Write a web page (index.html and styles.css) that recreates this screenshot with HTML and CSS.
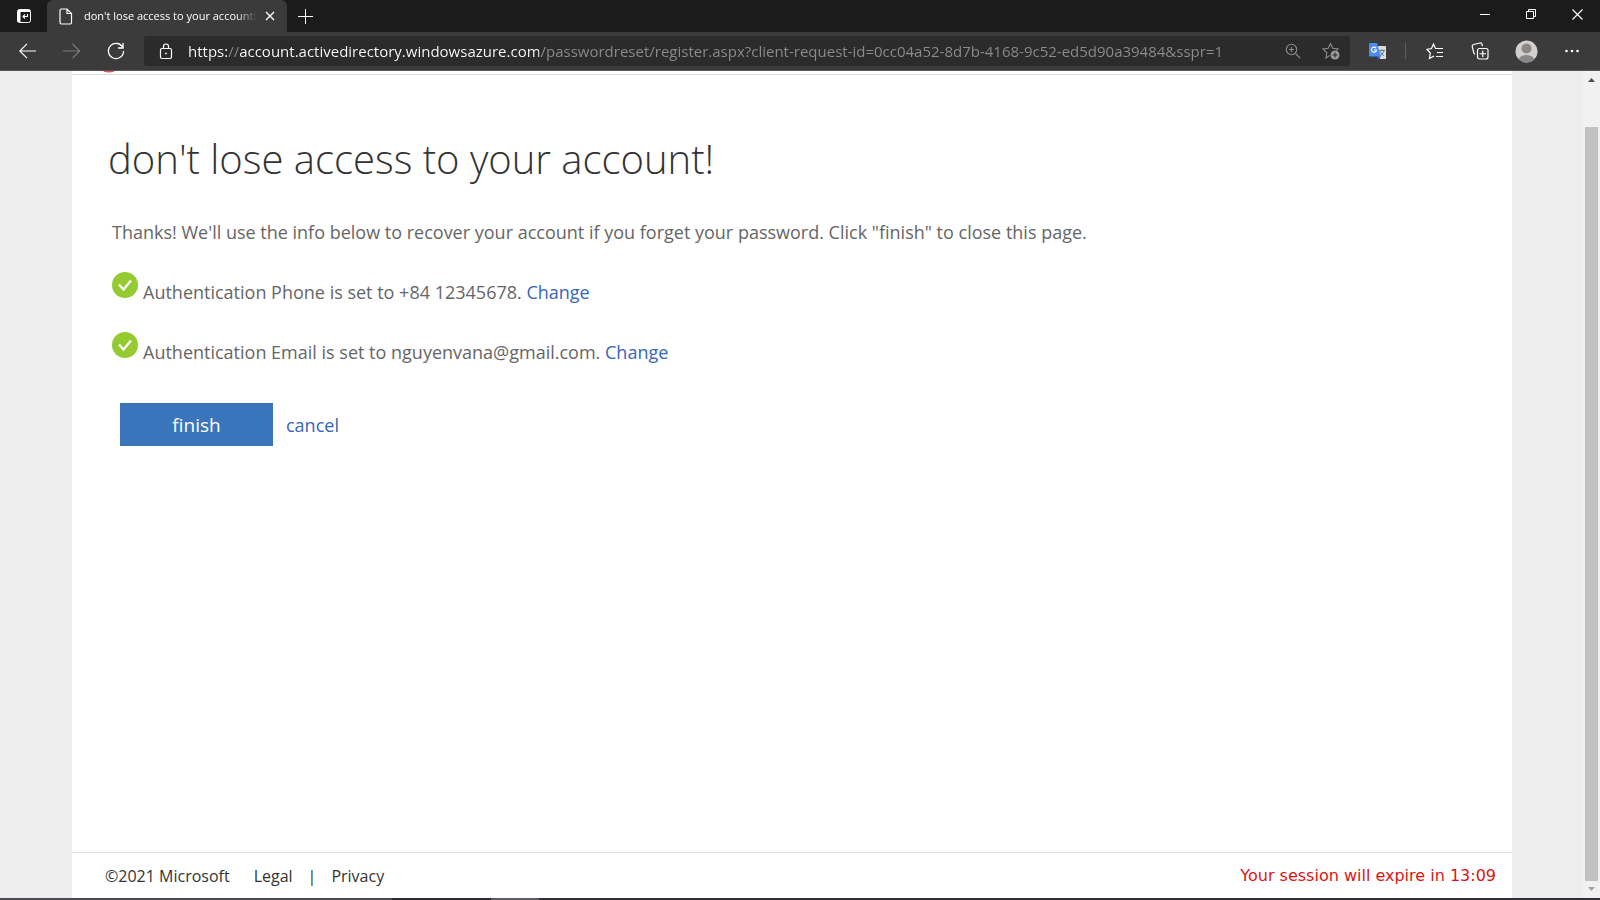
FILE: index.html
```
<!DOCTYPE html>
<html lang="en">

<head>
    <meta charset="UTF-8">
    <meta name="viewport" content="width=device-width, initial-scale=1.0">
    <title>don't lose access to your account!</title>
    <link rel="stylesheet" href="styles.css">
</head>

<body>
    <header class="browser">
        <div class="tab-strip">
            <button class="icon-btn tab-actions" aria-label="Tab actions">
                <svg width="16" height="16" viewBox="0 0 16 16" fill="none" stroke="#fff">
                    <rect x="1.5" y="1.5" width="13" height="13" rx="2" />
                    <path d="M2 3h12" stroke-width="2" />
                    <path d="M3 4v10" stroke-width="3" />
                    <path d="M11.500 6v2.500H7M9 6.500l-2 2 2 2" stroke-width="1.1" />
                </svg>
            </button>
            <div class="tab">
                <svg width="14" height="17" viewBox="0 0 14 17" fill="none" stroke="#fff" stroke-width="1.2">
                    <path d="M2.500 1H8l4.500 4.500V14.500a1.500 1.500 0 0 1-1.500 1.500H2.500A1.500 1.500 0 0 1 1 14.500v-12A1.500 1.500 0 0 1 2.500 1zM8 1v4.500h4.500" />
                </svg>
                <span class="tab-title">don't lose access to your account!</span>
                <button class="icon-btn tab-close" aria-label="Close tab">
                    <svg width="10" height="10" viewBox="0 0 10 10" stroke="#fff" stroke-width="1.3">
                        <path d="M1 1l8 8M9 1L1 9" />
                    </svg>
                </button>
            </div>
            <button class="icon-btn new-tab" aria-label="New tab">
                <svg width="15" height="15" viewBox="0 0 15 15" stroke="#fff">
                    <path d="M7.500 0v15M0 7.500h15" />
                </svg>
            </button>
            <div class="window-buttons">
                <button class="icon-btn" aria-label="Minimize">
                    <svg width="10" height="11" viewBox="0 0 10 11" stroke="#fff"><path d="M0 5.500h10" /></svg>
                </button>
                <button class="icon-btn" aria-label="Restore">
                    <svg width="10" height="10" viewBox="0 0 10 10" fill="none" stroke="#fff">
                        <path d="M.5 2.500h7v7h-7zM2.500 2.500v-2h7v7h-2" />
                    </svg>
                </button>
                <button class="icon-btn" aria-label="Close">
                    <svg width="11" height="11" viewBox="0 0 11 11" stroke="#fff" stroke-width="1.1">
                        <path d="M.5.5l10 10M10.500.5l-10 10" />
                    </svg>
                </button>
            </div>
        </div>

        <div class="toolbar">
            <div class="nav-buttons">
                <button class="icon-btn" aria-label="Back">
                    <svg width="18" height="16" viewBox="0 0 18 16" fill="none" stroke="#fff" stroke-width="1.2">
                        <path d="M17 8H1M8 .8L.8 8 8 15.200" />
                    </svg>
                </button>
                <button class="icon-btn" aria-label="Forward" disabled>
                    <svg width="18" height="16" viewBox="0 0 18 16" fill="none" stroke="#7d7d7d" stroke-width="1.2">
                        <path d="M0 8h16.500M9.500.8L16.700 8l-7.200 7.200" />
                    </svg>
                </button>
                <button class="icon-btn" aria-label="Refresh">
                    <svg width="18" height="18" viewBox="0 0 18 18" fill="none" stroke="#fff" stroke-width="1.3">
                        <path d="M16 6A7.600 7.600 0 1 0 16.600 9M16 1v5h-5" />
                    </svg>
                </button>
            </div>
            <form class="address-bar">
                <svg width="14" height="17" viewBox="0 0 14 17" fill="none" stroke="#fff" stroke-width="1.2">
                    <rect x="1.500" y="5.500" width="11" height="10" rx="1.500" />
                    <path d="M4.500 5.500V3.500a2.500 2.500 0 0 1 5 0v2" />
                    <circle cx="7" cy="10.500" r=".7" fill="#fff" stroke-width=".5" />
                </svg>
                <input class="url" type="text" aria-label="Address" value="https://account.activedirectory.windowsazure.com/passwordreset/register.aspx?client-request-id=0cc04a52-8d7b-4168-9c52-ed5d90a39484&amp;sspr=1">
                <button type="button" class="icon-btn" aria-label="Zoom">
                    <svg width="16" height="16" viewBox="0 0 16 16" fill="none" stroke="#8c8c8c" stroke-width="1.1">
                        <circle cx="6.500" cy="6.500" r="5.200" />
                        <path d="M10.500 10.500L15 15M4 6.500h5M6.500 4v5" />
                    </svg>
                </button>
                <button type="button" class="icon-btn" aria-label="Add to favorites">
                    <svg width="18" height="18" viewBox="0 0 18 18" fill="none" stroke="#8c8c8c" stroke-width="1.1">
                        <path d="M7.500 13.500L4 16l.8-5.200L1 7l5.200-.8L8.500 1.500l2.300 4.700L16 7l-1.500 1.500" />
                        <circle cx="13" cy="13" r="4.500" fill="#9b9b9b" stroke="none" />
                        <path d="M13 10.500v5M10.500 13h5" stroke="#2b2b2b" />
                    </svg>
                </button>
            </form>
            <div class="toolbar-buttons">
                <button class="icon-btn" aria-label="Google Translate">
                    <svg width="17" height="17" viewBox="0 0 17 17">
                        <path d="M7 3h9a1 1 0 0 1 1 1v11a1 1 0 0 1-1 1h-5z" fill="#dcdcdc" />
                        <path d="M10 7.500h6M13 6v1.500M15 7.500c-.5 3-2.500 4.500-4 5M11.500 8.500c.5 2 2 3.500 3.500 4" fill="none" stroke="#607d8b" />
                        <path d="M8.500 13.500h3.500L9.500 16.500z" fill="#3367d6" />
                        <path d="M1 0h7l4 13.500H1a1 1 0 0 1-1-1V1a1 1 0 0 1 1-1z" fill="#4c8bf5" />
                        <path d="M7 5.200A2.500 2.500 0 1 0 7.500 7H5" fill="none" stroke="#fff" stroke-width="1.2" />
                    </svg>
                </button>
                <span class="divider"></span>
                <button class="icon-btn" aria-label="Favorites">
                    <svg width="17" height="17" viewBox="0 0 17 17" fill="none" stroke="#fff" stroke-width="1.2">
                        <path d="M10 5.500H9.500L7.500 1 5.500 5.500 1 6.500 4.300 10 3.500 15.500 8 13M9 5.500h8M11 9.500h6M10 13.500h7" />
                    </svg>
                </button>
                <button class="icon-btn" aria-label="Collections">
                    <svg width="18" height="18" viewBox="0 0 18 18" fill="none" stroke="#fff" stroke-width="1.2">
                        <rect x="6.500" y="6.500" width="10.500" height="10.500" rx="2" />
                        <path d="M11.750 8.500v6.500M8.500 11.750H15M4 12.500L2.800 11 1.200 4.500A1.800 1.800 0 0 1 2.500 2.500L9 1a1.800 1.800 0 0 1 2 1.200l.5 2" />
                    </svg>
                </button>
                <button class="icon-btn" aria-label="Profile">
                    <svg width="23" height="23" viewBox="0 0 23 23">
                        <defs><clipPath id="avatar"><circle cx="11.500" cy="11.500" r="11" /></clipPath></defs>
                        <g clip-path="url(#avatar)">
                            <rect width="23" height="23" fill="#d2d0ce" />
                            <circle cx="11.500" cy="8.500" r="5" fill="#8a8886" />
                            <ellipse cx="11.500" cy="20.500" rx="8" ry="5.500" fill="#8a8886" />
                        </g>
                    </svg>
                </button>
                <button class="icon-btn" aria-label="Settings and more">
                    <svg width="14" height="4" viewBox="0 0 14 4" fill="#fff">
                        <circle cx="1.500" cy="2" r="1.300" />
                        <circle cx="7" cy="2" r="1.300" />
                        <circle cx="12.500" cy="2" r="1.300" />
                    </svg>
                </button>
            </div>
        </div>
    </header>

    <div class="viewport">
        <div class="page">
            <div class="banner">
                <svg width="12" height="2" viewBox="0 0 12 2"><ellipse cx="6" cy="0" rx="5.500" ry="1.400" fill="#e8504a" /></svg>
            </div>
            <main>
                <h1>don't lose access to your account!</h1>
                <div class="info">
                    <p>Thanks! We'll use the info below to recover your account if you forget your password. Click "finish" to close this page.</p>
                    <p class="method">
                        <svg width="26" height="26" viewBox="0 0 26 26">
                            <circle cx="13" cy="13" r="13" fill="#94cb31" />
                            <path d="M7 12.500l4.500 5 7.500-9" fill="none" stroke="#fff" stroke-width="2.200" />
                        </svg>
                        <span>Authentication Phone is set to +84 12345678. <a href="#">Change</a></span>
                    </p>
                    <p class="method">
                        <svg width="26" height="26" viewBox="0 0 26 26">
                            <circle cx="13" cy="13" r="13" fill="#94cb31" />
                            <path d="M7 12.500l4.500 5 7.500-9" fill="none" stroke="#fff" stroke-width="2.200" />
                        </svg>
                        <span>Authentication Email is set to nguyenvana@gmail.com. <a href="#">Change</a></span>
                    </p>
                </div>
                <div class="actions">
                    <button class="finish">finish</button>
                    <a href="#">cancel</a>
                </div>
            </main>
            <footer>
                <span class="copyright">©2021 Microsoft</span>
                <a href="#">Legal</a>
                <span class="separator">|</span>
                <a href="#">Privacy</a>
                <span class="session">Your session will expire in 13:09</span>
            </footer>
        </div>
        <div class="scrollbar">
            <svg width="7" height="4" viewBox="0 0 7 4"><path d="M0 4L3.500 0 7 4z" fill="#505050" /></svg>
            <div class="thumb"></div>
            <svg width="7" height="4" viewBox="0 0 7 4"><path d="M0 0l3.500 4L7 0z" fill="#a3a3a3" /></svg>
        </div>
    </div>
    <div class="taskbar"></div>
</body>

</html>
```
FILE: styles.css
```
* {
    box-sizing: border-box;
}

body {
    margin: 0;
    height: 100vh;
    display: flex;
    flex-direction: column;
    overflow: hidden;
    font-family: "Open Sans", "Noto Sans", sans-serif;
    font-size: 18px;
    line-height: 24px;
    color: #666;
}

a {
    color: #3667b8;
    text-decoration: none;
}

.icon-btn {
    display: flex;
    align-items: center;
    justify-content: center;
    padding: 0;
    border: none;
    background: none;
}

/* Browser bars */
.tab-strip {
    display: flex;
    height: 32px;
    background: #1b1b1b;
}

.tab-actions {
    width: 47px;
}

.tab {
    display: flex;
    align-items: center;
    width: 240px;
    padding: 0 12px;
    background: #3b3b3b;
    border-radius: 6px 6px 0 0;
}

.tab-title {
    flex: 1;
    margin: 0 8px 0 11px;
    overflow: hidden;
    white-space: nowrap;
    font-size: 11px;
    color: #fff;
    -webkit-mask-image: linear-gradient(to right, #000 88%, transparent);
    mask-image: linear-gradient(to right, #000 88%, transparent);
}

.new-tab {
    width: 36px;
}

.window-buttons {
    display: flex;
    margin-left: auto;
    padding-bottom: 4px;
}

.window-buttons .icon-btn {
    width: 46px;
}

.toolbar {
    display: flex;
    align-items: center;
    height: 39px;
    padding-right: 5px;
    background: #3b3b3b;
    border-bottom: 1px solid #5a5656;
}

.nav-buttons {
    display: flex;
    padding: 0 6px;
}

.nav-buttons .icon-btn {
    width: 44px;
}

.address-bar {
    flex: 1;
    display: flex;
    align-items: center;
    height: 30px;
    padding-left: 15px;
    background: #2b2b2b;
    border-radius: 3px;
}

/* The host is brighter than the rest of the address */
.url {
    flex: 1;
    min-width: 0;
    margin-left: 15px;
    padding: 0;
    border: none;
    font-family: inherit;
    font-size: 15px;
    color: transparent;
    background: linear-gradient(to right, #fff 39px, #8c8c8c 39px, #8c8c8c 52px, #fff 52px, #fff 351px, #8c8c8c 351px);
    -webkit-background-clip: text;
    background-clip: text;
}

.address-bar .icon-btn {
    width: 38px;
}

.toolbar-buttons {
    display: flex;
    align-items: center;
    padding-left: 4px;
}

.toolbar-buttons .icon-btn {
    width: 46px;
}

.divider {
    width: 1px;
    height: 16px;
    margin: 0 5px;
    background: #5f5f5f;
}

/* Page */
.viewport {
    flex: 1;
    display: flex;
    min-height: 0;
    background: #ededed;
}

.page {
    flex: 1;
    display: flex;
    flex-direction: column;
    margin: 0 71px 0 72px;
    background: #fff;
}

.banner {
    display: flex;
    height: 4px;
    padding-left: 31px;
    border-bottom: 1px solid #ddd;
}

main {
    flex: 1;
    padding: 56px 36px 0;
}

h1 {
    margin: 0 0 33px;
    font-size: 40px;
    font-weight: 300;
    line-height: 56px;
    color: #333;
}

.info {
    padding-left: 4px;
}

.info p {
    margin: 0 0 28px;
}

.info .method {
    display: flex;
    gap: 5px;
    margin-bottom: 28px;
}

.method span {
    padding-top: 8px;
}

.actions {
    display: flex;
    align-items: center;
    gap: 13px;
    padding: 11px 12px;
}

.finish {
    width: 153px;
    height: 43px;
    padding: 0;
    border: none;
    background: #3a75bb;
    color: #fff;
    font-family: inherit;
    font-size: 19px;
}

footer {
    display: flex;
    align-items: center;
    height: 46px;
    padding: 0 16px 0 33px;
    border-top: 1px solid #ddd;
    font-size: 16px;
    color: #333;
}

footer a {
    color: #333;
}

.copyright {
    margin-right: 24px;
}

.separator {
    margin: 0 15px;
}

.session {
    margin-left: auto;
    font-family: "DejaVu Sans", sans-serif;
    color: #dc1414;
}

.scrollbar {
    display: flex;
    flex-direction: column;
    align-items: center;
    width: 17px;
    padding: 7px 0 7px;
    background: #f1f1f1;
}

.thumb {
    flex: 1;
    width: 13px;
    margin: 45px 0 6px;
    background: #c1c1c1;
}

.taskbar {
    height: 2px;
    background: linear-gradient(to right, #4a4b4e 392px, #2a2b2f 392px, #2a2b2f 491px, #5c5d60 491px, #5c5d60 539px, #2f3034 539px);
}
```
